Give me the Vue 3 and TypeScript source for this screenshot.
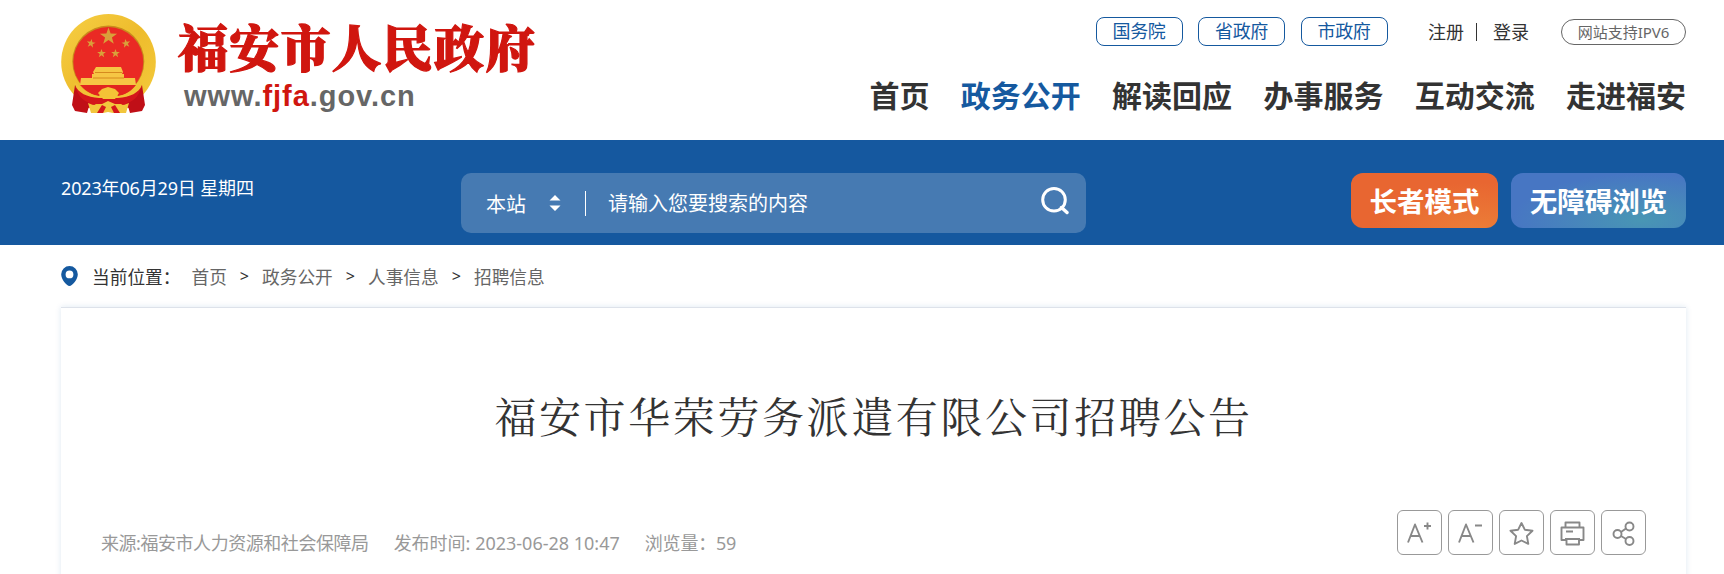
<script setup lang="ts">
import { ref } from 'vue';

interface NavItem {
  title: string;
  active?: boolean;
}

const govLinks = ['国务院', '省政府', '市政府'];

const navItems: NavItem[] = [
  { title: '首页' },
  { title: '政务公开', active: true },
  { title: '解读回应' },
  { title: '办事服务' },
  { title: '互动交流' },
  { title: '走进福安' },
];

const crumbs = ['首页', '政务公开', '人事信息', '招聘信息'];

const keyword = ref('');

// five-pointed star as a polygon points string
const star = (cx: number, cy: number, r: number, turn = 0) => {
  const pts: string[] = [];
  for (let i = 0; i < 10; i++) {
    const rad = i % 2 ? r * 0.4 : r;
    const a = ((i * 36 - 90 + turn) * Math.PI) / 180;
    pts.push(`${(cx + rad * Math.cos(a)).toFixed(2)},${(cy + rad * Math.sin(a)).toFixed(2)}`);
  }
  return pts.join(' ');
};
</script>

<template>
  <div class="page">
    <header class="header">
      <div class="logo">
        <svg class="emblem" width="95" height="100" viewBox="0 0 95 100">
          <defs>
            <linearGradient id="gold" x1="0" y1="0" x2="1" y2="1">
              <stop offset="0" stop-color="#f6cf45" />
              <stop offset="0.5" stop-color="#eebc2c" />
              <stop offset="1" stop-color="#f4cb3c" />
            </linearGradient>
          </defs>
          <ellipse cx="47.5" cy="48" rx="47.3" ry="48" fill="url(#gold)" />
          <circle cx="47.3" cy="47.5" r="36" fill="#c98a1c" />
          <circle cx="47.3" cy="48" r="35" fill="#ea2a24" />
          <polygon :points="star(47.5, 22.5, 9)" fill="#d9a03a" />
          <polygon :points="star(30, 29.5, 4.6, 10)" fill="#d9a03a" />
          <polygon :points="star(65, 29.5, 4.6, -10)" fill="#d9a03a" />
          <polygon :points="star(40.5, 39.5, 4.6)" fill="#d9a03a" />
          <polygon :points="star(54.5, 39.5, 4.6)" fill="#d9a03a" />
          <path d="M35 53h25l2 5-1 2h2v4h11l1 7H19l1-7h11v-4h2l-1-2z" fill="#f6c644" />
          <path d="M34 58.500h27M32 64h31" stroke="#d68a1e" stroke-width="1" />
          <path d="M19 71h56c-6 8-14 12-27.500 12S26 79 19 71z" fill="#e2241f" />
          <path d="M14 68q12 13 24 14l4-5 5-3 6 3 4 5q12-1 23-14l4 8-12 14H24L12 78z" fill="#f1c236" />
          <path d="M14 71c3 8 12 12 24 13h19c12-1 21-5 24-13l-2 20-12 3-7-4H35l-7 4-12-3z" fill="#d4161b" />
          <path d="M14 71l-3 20 3 6 12 2 3-10c-8-2-13-9-15-18zM81 71l3 20-3 6-12 2-3-10c8-2 13-9 15-18z" fill="#c00f17" />
          <path d="M37 79l4-4 6-2 7 2 4 4-4 6H42z" fill="#f4c336" />
          <path d="M27 89q8 4 14 1l6-3 7 3q6 3 14-1l-3 10H52l-5-1-5 1H30z" fill="#f2c63d" />
          <path d="M36 99l5-8 4 2-3 6zM59 99l-5-8-4 2 3 6z" fill="#d4161b" />
        </svg>
        <div class="logo-text">
          <div class="logo-name">福安市人民政府</div>
          <div class="logo-url">www.<span>fjfa</span>.gov.cn</div>
        </div>
      </div>

      <div class="header-right">
        <div class="top-links">
          <a v-for="link in govLinks" :key="link" class="gov-link">{{ link }}</a>
          <div class="user-links">
            <a>注册</a>
            <i></i>
            <a>登录</a>
          </div>
          <a class="ipv6">网站支持IPV6</a>
        </div>
        <nav class="nav">
          <a v-for="item in navItems" :key="item.title" :class="{ active: item.active }">{{ item.title }}</a>
        </nav>
      </div>
    </header>

    <div class="banner">
      <div class="date">2023年06月29日 星期四</div>
      <div class="search">
        <span class="scope">本站</span>
        <svg class="arrows" width="12" height="16" viewBox="0 0 12 16">
          <path d="M6 0l5.500 5.500H.5zM6 16L.5 10.500h11z" fill="#fff" />
        </svg>
        <input v-model="keyword" type="text" placeholder="请输入您要搜索的内容" />
        <svg class="search-icon" width="28" height="28" viewBox="0 0 28 28" fill="none" stroke="#fff" stroke-linecap="round">
          <circle cx="13" cy="12.800" r="11.300" stroke-width="3" />
          <path d="M20.500 20.500l5.500 5" stroke-width="3.400" />
        </svg>
      </div>
      <div class="modes">
        <a class="mode elder">长者模式</a>
        <a class="mode barrier">无障碍浏览</a>
      </div>
    </div>

    <div class="crumbs">
      <svg width="17" height="20" viewBox="0 0 17 20">
        <path d="M8.500 0A8.300 8.300 0 0 0 .2 8.300C.2 13.500 5.500 20 8.500 20s8.300-6.500 8.300-11.700A8.300 8.300 0 0 0 8.500 0zm0 4.500a3.900 3.900 0 1 1 0 7.800 3.900 3.900 0 0 1 0-7.800z" fill="#15599f" />
      </svg>
      <span class="crumbs-label">当前位置：</span>
      <template v-for="(crumb, i) in crumbs" :key="crumb">
        <span v-if="i" class="sep">&gt;</span>
        <a>{{ crumb }}</a>
      </template>
    </div>

    <main class="article">
      <h1>福安市华荣劳务派遣有限公司招聘公告</h1>
      <div class="info">
        <div class="meta">
          <span class="source">来源:福安市人力资源和社会保障局</span>
          <span class="time">发布时间: 2023-06-28 10:47</span>
          <span class="views">浏览量：59</span>
        </div>
        <div class="tools">
          <button>
            <svg viewBox="0 0 45 45"><path d="M11 32.500L18 14.500l7.500 18M13.500 26h9.500M27 16h7M30.500 12.500v7" /></svg>
          </button>
          <button>
            <svg viewBox="0 0 45 45"><path d="M11 32.500L18 14.500l7.500 18M13.500 26h9.500M27 15.500h7" /></svg>
          </button>
          <button>
            <svg viewBox="0 0 45 45">
              <path d="M22.500 13l3.300 6.700 7.700 1-5.600 5.400 1.400 7.800-6.800-3.400-6.800 3.400 1.400-7.800-5.600-5.400 7.700-1z" />
            </svg>
          </button>
          <button>
            <svg viewBox="0 0 45 45">
              <path d="M15.500 17.500v-5h14v5M16 30h-4.500V17.500h22V30H29M16 21.500h7M15 29h15M16.500 29v5.500H29V29" />
            </svg>
          </button>
          <button>
            <svg viewBox="0 0 45 45">
              <circle cx="16.500" cy="24" r="4" /><circle cx="28.500" cy="16.500" r="4" /><circle cx="28.500" cy="31" r="4" />
              <path d="M20 22l5-3.500M20 26l5 3" />
            </svg>
          </button>
        </div>
      </div>
    </main>
  </div>
</template>

<style>
body {
  background: #fff;
  overflow: hidden;
}
</style>

<style scoped>
.page {
  height: 574px;
  overflow: hidden;
  font-family: "Noto Sans", "Noto Sans CJK SC", sans-serif;
  color: #333;
}

.header {
  display: flex;
  justify-content: space-between;
  height: 140px;
  padding: 0 38px 0 61px;
  box-sizing: border-box;
}

.logo {
  display: flex;
  padding-top: 14px;
}

.logo-text {
  margin-left: 22px;
}

.logo-name {
  height: 68px;
  line-height: 62px;
  font-family: "Noto Serif CJK SC", "Noto Sans CJK SC", serif;
  font-size: 50px;
  font-weight: 900;
  letter-spacing: 1.2px;
  color: #d0160f;
  -webkit-text-stroke: 1.2px #d0160f;
}

.logo-url {
  margin-left: 6px;
  font: bold 29px/29px "Liberation Sans", sans-serif;
  letter-spacing: 0.95px;
  color: #666;
}

.logo-url span {
  color: #d0160f;
}

.header-right {
  display: flex;
  flex-direction: column;
  align-items: flex-end;
}

.top-links {
  display: flex;
  align-items: center;
  height: 29px;
  margin-top: 17px;
  font-size: 18px;
}

.gov-link {
  width: 87px;
  height: 29px;
  box-sizing: border-box;
  margin-right: 15.500px;
  border: 1px solid #15599f;
  border-radius: 8px;
  line-height: 27px;
  text-align: center;
  letter-spacing: -0.3px;
  color: #15599f;
}

.user-links {
  display: flex;
  align-items: center;
  margin: 0 32px 2px 25px;
}

.user-links i {
  width: 1px;
  height: 18px;
  margin: 2px 16px 0 12px;
  background: #333;
}

.ipv6 {
  width: 125px;
  height: 26px;
  box-sizing: border-box;
  border: 1px solid #666;
  border-radius: 13px;
  line-height: 24px;
  text-align: center;
  font-size: 15px;
  color: #666;
}

.nav {
  display: flex;
  gap: 31.300px;
  margin-top: 28px;
  line-height: 44px;
  font-size: 30px;
  font-weight: bold;
}

.nav .active {
  color: #15599f;
}

.banner {
  display: flex;
  height: 105px;
  padding: 33px 38px 0 61px;
  box-sizing: border-box;
  background: #15589f;
  color: #fff;
}

.date {
  width: 400px;
  line-height: 30px;
  font-size: 18px;
  letter-spacing: -0.15px;
}

.search {
  display: flex;
  align-items: center;
  width: 625px;
  height: 60px;
  padding: 0 17px 0 25px;
  box-sizing: border-box;
  border-radius: 10px;
  background: #467ab2;
  font-size: 20px;
}

.arrows {
  margin-left: 23px;
}

.search input {
  flex: 1;
  height: 25px;
  margin-left: 24px;
  padding: 0 0 0 22px;
  border: 0;
  border-left: 1px solid #fff;
  outline: none;
  background: none;
  font: inherit;
  color: #fff;
}

.search input::placeholder {
  color: #fff;
  opacity: 1;
}

.search-icon {
  margin-bottom: 5px;
}

.modes {
  display: flex;
  gap: 13px;
  margin-left: auto;
}

.mode {
  height: 55px;
  border-radius: 12px;
  line-height: 57px;
  text-align: center;
  font-size: 27.500px;
  font-weight: bold;
}

.elder {
  width: 147px;
  background: radial-gradient(ellipse at 85% 110%, #ec7f38, #e86631 60%);
}

.barrier {
  width: 175px;
  background: radial-gradient(ellipse at 75% 85%, #4896b4, #4776c3 70%);
}

.crumbs {
  display: flex;
  align-items: center;
  height: 61px;
  padding: 0 0 1px 61px;
  box-sizing: content-box;
  font-size: 17.700px;
}

.crumbs a {
  color: #666;
}

.crumbs-label {
  margin: 0 11px 0 14px;
}

.sep {
  width: 35.200px;
  text-align: center;
  font-size: 16px;
}

.article {
  width: 1625px;
  height: 500px;
  margin-left: 61px;
  padding: 0 40px;
  box-sizing: border-box;
  border-top: 1px solid #dde2ea;
  box-shadow: 0 0 6px rgba(21, 89, 159, 0.14);
}

h1 {
  margin: 75px 0 0;
  line-height: 64px;
  text-align: center;
  font-family: "Noto Serif CJK SC", "Noto Sans CJK SC", serif;
  font-size: 42px;
  font-weight: 400;
  letter-spacing: 2.600px;
}

.info {
  display: flex;
  justify-content: space-between;
  margin-top: 63px;
}

.meta {
  display: flex;
  line-height: 66px;
  font-size: 18px;
  color: #999;
}

.source {
  margin-right: 25px;
  letter-spacing: -0.45px;
}

.time {
  margin-right: 25px;
}

.views {
  letter-spacing: -0.2px;
}

.tools {
  display: flex;
  gap: 6px;
}

.tools button {
  width: 45px;
  height: 45px;
  padding: 0;
  border: 1px solid #999;
  border-radius: 6px;
  background: #fff;
}

.tools svg {
  display: block;
  width: 45px;
  height: 45px;
  margin: -1px;
  fill: none;
  stroke: #888;
  stroke-width: 1.900;
  stroke-linejoin: round;
}
</style>
